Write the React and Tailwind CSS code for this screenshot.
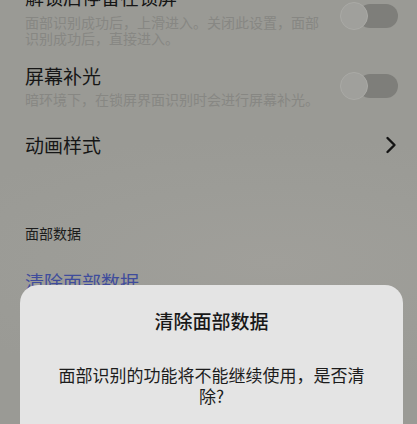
const font = { fontFamily: '"Noto Sans CJK SC", "Noto Sans", sans-serif' };

function Toggle() {
  return (
    <div className="relative w-[58px] h-[28px] shrink-0">
      <div className="absolute right-0 top-[2px] w-[40px] h-[24px] rounded-full bg-[#7e7e7a]" />
      <div className="absolute left-0 top-0 w-[28px] h-[28px] rounded-full bg-[#a0a09c] border border-[#aaaaa6]" />
    </div>
  );
}

function Chevron() {
  return (
    <svg width="12" height="18" viewBox="0 0 12 18" fill="none" className="shrink-0">
      <path d="M2.5 2 L9.5 9 L2.5 16" stroke="#141414" strokeWidth="2.4" strokeLinecap="round" strokeLinejoin="round" />
    </svg>
  );
}

export default function App() {
  return (
    <div
      className="relative w-[417px] h-[424px] overflow-hidden bg-[#9a9a95] bg-[radial-gradient(ellipse_90%_30%_at_65%_62%,#a09f9a_0%,#9c9c97_60%,#9a9a95_100%)]"
      style={font}
    >
      <div className="pl-[25px] pr-[19px] -mt-[15px]">
        <div className="flex items-center justify-between">
          <div>
            <p className="text-[19px] leading-[24px] text-[#161616]">解锁后停留在锁屏</p>
            <p className="mt-[5px] text-[14px] leading-[16px] text-[#878783] w-[300px]">
              面部识别成功后，上滑进入。关闭此设置，面部识别成功后，直接进入。
            </p>
          </div>
          <Toggle />
        </div>

        <div className="flex items-center justify-between mt-[18px]">
          <div>
            <p className="text-[19px] leading-[24px] text-[#161616]">屏幕补光</p>
            <p className="mt-[3px] text-[14px] leading-[16px] text-[#878783]">
              暗环境下，在锁屏界面识别时会进行屏幕补光。
            </p>
          </div>
          <Toggle />
        </div>

        <div className="flex items-center justify-between mt-[26px] pr-[1px]">
          <p className="text-[19px] leading-[24px] text-[#161616]">动画样式</p>
          <Chevron />
        </div>

        <p className="mt-[66px] text-[14px] leading-[20px] text-[#1c1c1c]">面部数据</p>

        <p className="mt-[27px] text-[19px] leading-[24px] text-[#3f4c9c]">清除面部数据</p>
      </div>

      <div className="absolute left-[20px] top-[285px] w-[383px] h-[160px] rounded-[18px] bg-[#e4e4e4] px-[32px] pt-[23px] text-center">
        <p className="text-[19px] leading-[26px] font-medium text-[#181818]">清除面部数据</p>
        <p className="mt-[30px] text-[17px] leading-[21px] text-[#1c1c1c]">
          面部识别的功能将不能继续使用，是否清除?
        </p>
      </div>
    </div>
  );
}
